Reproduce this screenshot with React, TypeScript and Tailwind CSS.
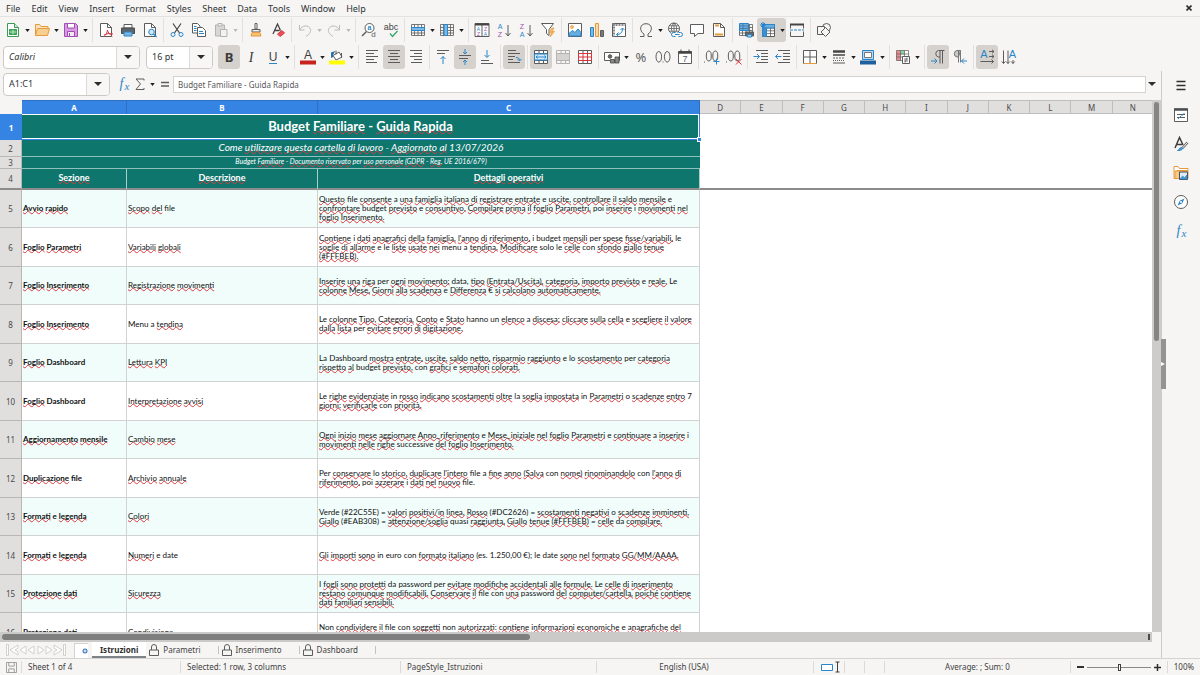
import React from 'react';

const G = '#5c5c5c';
const B = '#2a86c8';
const O = '#e69a3a';
const R = '#d8343c';
const P = '#a04fb0';

type Kids = { children?: React.ReactNode };

function Svg({ children }: Kids) {
  return (
    <svg viewBox="0 0 16 16" className="h-4 w-4 shrink-0" fill="none" stroke={G} strokeWidth="1" aria-hidden="true">
      {children}
    </svg>
  );
}

type GlyphProps = { x: number; y: number; s: number; c?: string; f?: string; w?: number; i?: boolean; t: string };
function Glyph({ x, y, s, c = G, f = 'Liberation Sans, sans-serif', w = 400, i = false, t }: GlyphProps) {
  return (
    <text x={x} y={y} fontSize={s} fill={c} stroke="none" fontFamily={f} fontWeight={w} fontStyle={i ? 'italic' : 'normal'} textAnchor="middle">
      {t}
    </text>
  );
}

const LinesIcon = ({ rows }: { rows: [number, number, number][] }) => (
  <Svg>
    {rows.map(([y, a, b]) => (
      <path key={y} d={`M${a} ${y}H${b}`} />
    ))}
  </Svg>
);

const GRID = 'M1.5 2.5h13v11h-13zM1.5 5.5h13M1.5 8.5h13M1.5 11h13M4.5 2.5v11M8 2.5v11M11.5 2.5v11';

const icons = {
  newSheet: (
    <Svg>
      <path d="M2.5 1.5h7l4 4v9h-11z" fill="#fff" stroke="#3a9b52" />
      <path d="M9.5 1.5v4h4" fill="#cfe9d4" stroke="#3a9b52" />
      <path d="M4.5 7.5h7v5h-7z" fill="#4caf65" stroke="#3a9b52" />
      <path d="M4.5 10h7M8 7.5v5" stroke="#d8f0dc" strokeWidth=".7" />
    </Svg>
  ),
  open: (
    <Svg>
      <path d="M1.5 13.5v-11h4l1.5 2h7v2" fill="#fbe3bd" stroke={O} />
      <path d="M1.5 13.5l2-7h12l-2 7z" fill="#f8cf91" stroke={O} />
    </Svg>
  ),
  save: (
    <Svg>
      <path d="M1.500 1.500h11l2 2v11h-13z" fill="#d69be2" stroke={P} />
      <path d="M4.500 1.500h7v4.500h-7z" fill="#fff" stroke={P} />
      <path d="M4.500 9.500h7v5h-7z" fill="#f4e6f7" stroke={P} />
      <path d="M6.500 11v3.500" stroke={P} />
    </Svg>
  ),
  pdf: (
    <Svg>
      <path d="M2.500 1.500h7l4 4v9h-11z" fill="#fff" />
      <path d="M9.500 1.500v4h4" />
      <path d="M6 14.500c2-1.500 3.500-4 3.300-6.500M6 13c3-1.500 6-2 9-1M9.300 8c.7 2.500 2.500 4.500 5 6.500" stroke={R} />
    </Svg>
  ),
  print: (
    <Svg>
      <path d="M4 2.500h8v3.500h-8z" fill="#fff" />
      <path d="M1.500 6h13v5.500h-13z" fill="#5d6468" stroke="#4a4f52" />
      <path d="M4 10h8v4h-8z" fill="#79b6e3" stroke={B} />
    </Svg>
  ),
  preview: (
    <Svg>
      <path d="M2.500 1.500h7l4 4v9h-11z" fill="#fff" />
      <path d="M9.500 1.500v4h4" />
      <circle cx="9.500" cy="10" r="2.800" fill="#cfe5f6" stroke={B} />
      <path d="M11.500 12l3 3" stroke={B} strokeWidth="1.400" />
    </Svg>
  ),
  cut: (
    <Svg>
      <path d="M4 1.500l6.500 9.500M12 1.500L5.500 11" stroke="#444" strokeWidth="1.200" />
      <circle cx="4" cy="12.500" r="2" stroke={B} />
      <circle cx="12" cy="12.500" r="2" stroke={B} />
    </Svg>
  ),
  copy: (
    <Svg>
      <path d="M1.500 1.500h5l2.500 2.500v7h-7.500z" fill="#fff" />
      <path d="M6.500 5.500h5l3 3v6h-8z" fill="#fff" />
      <path d="M3 4.500h2.500M3 6.500h2.500M3 8.500h2.500M8 9.500h4M8 11.500h5" stroke={B} />
    </Svg>
  ),
  paste: (
    <Svg>
      <path d="M2.500 3h9v11h-9z" fill="#d9d7d5" stroke="#b5b3b1" />
      <path d="M5 1.500h4v2.500h-4z" fill="#eee" stroke="#b5b3b1" />
      <path d="M7.500 7.500h6.500v7h-6.500z" fill="#f3f2f1" stroke="#b5b3b1" />
    </Svg>
  ),
  brush: (
    <Svg>
      <path d="M7 1.500h2v5.500h-2z" fill="#fff" />
      <path d="M4 7.500h8v2.500h-8z" fill="#eee" />
      <path d="M4 10.500h8l1 3.500h-10z" fill="#f6c27a" stroke={O} />
    </Svg>
  ),
  clear: (
    <Svg>
      <path d="M3 12L7.500 2l3 6.500M4.500 8.500h5" stroke="#444" strokeWidth="1.300" />
      <path d="M7.500 12l4.500-3.500 2.500 2.500-4.500 3.500z" fill="#e8505a" stroke={R} />
    </Svg>
  ),
  undo: (
    <Svg>
      <path d="M2.500 3v5h5M2.500 8c2-4.500 9.500-6 11-.5.500 3-1.500 5-4.500 7" stroke="#bcbab8" />
    </Svg>
  ),
  redo: (
    <Svg>
      <path d="M13.500 3v5h-5M13.500 8c-2-4.500-9.500-6-11-.5-.500 3 1.500 5 4.500 7" stroke="#bcbab8" />
    </Svg>
  ),
  find: (
    <Svg>
      <circle cx="8.500" cy="6" r="4.500" fill="#fff" />
      <path d="M5.500 9.500L1 14" strokeWidth="1.400" />
      <Glyph x={8.500} y={8} s={7} c={B} w={700} t="a" />
      <Glyph x={12.500} y={15} s={8} t="d" />
    </Svg>
  ),
  spell: (
    <Svg>
      <Glyph x={8} y={7.500} s={9} c="#444" t="abc" />
      <path d="M7 11.500l2.500 3 5-5.500" stroke="#35a869" strokeWidth="1.300" />
    </Svg>
  ),
  row: (
    <Svg>
      <path d={GRID} strokeWidth=".8" />
      <path d="M1.500 5.500h13v3h-13z" fill="#7db9e6" stroke={B} />
    </Svg>
  ),
  column: (
    <Svg>
      <path d={GRID} strokeWidth=".8" />
      <path d="M5 2.500h3.500v11H5z" fill="#7db9e6" stroke={B} />
    </Svg>
  ),
  sort: (
    <Svg>
      <path d="M1 1.500h14v13H1zM8 1.500v13" fill="#fff" />
      <path d="M1 2.500h14" stroke="#444" strokeWidth="2" />
      <Glyph x={4.500} y={8.500} s={5} c={B} t="A" />
      <Glyph x={4.500} y={14} s={5} c={P} t="Z" />
      <Glyph x={11.500} y={8.500} s={5} c={P} t="Z" />
      <Glyph x={11.500} y={14} s={5} c={B} t="A" />
    </Svg>
  ),
  sortAsc: (
    <Svg>
      <Glyph x={4} y={7} s={7} c={B} t="A" />
      <Glyph x={4} y={15} s={7} c={P} t="Z" />
      <path d="M12 3v11M9.500 11l2.500 3 2.500-3" />
    </Svg>
  ),
  sortDesc: (
    <Svg>
      <Glyph x={4} y={7} s={7} c={P} t="Z" />
      <Glyph x={4} y={15} s={7} c={B} t="A" />
      <path d="M12 3v11M9.500 11l2.500 3 2.500-3" />
    </Svg>
  ),
  filter: (
    <Svg>
      <path d="M1.500 1.500h12l-4.500 6v6l-2.500-2v-4z" fill="#fff" />
      <path d="M12 6l-3 4.500h2.500L10 15l4.500-5.500H12l2-3.500z" fill="#f6b65c" stroke={O} strokeWidth=".7" />
    </Svg>
  ),
  image: (
    <Svg>
      <path d="M1.500 1.500h13v13h-13z" fill="#fff" />
      <path d="M2 14v-2.500l3.500-3 2.500 2 3-3.500 3 3.500V14z" fill="#6aaee0" stroke={B} />
      <circle cx="5" cy="5" r="1.500" fill="#f6c27a" stroke={O} strokeWidth=".7" />
    </Svg>
  ),
  chart: (
    <Svg>
      <path d="M1.500 5.500h3v9h-3z" fill="#7db9e6" stroke={B} />
      <path d="M6.500 1.500h3v13h-3z" fill="#fbd9a4" stroke={O} />
      <path d="M11.500 8.500h3v6h-3z" fill="#7a7a7a" />
    </Svg>
  ),
  pivot: (
    <Svg>
      <path d="M1.500 1.500h13v13h-13z" fill="#fff" />
      <path d="M1.500 3h13M3 1.500v13" stroke="#8a8a8a" strokeWidth="2" strokeDasharray="2 1" />
      <path d="M5.500 12.500c4 0 6-2 6-6M9.500 8l2-2 2 2M7.500 10.500l-2 2 2 2" stroke={B} />
    </Svg>
  ),
  omega: (
    <Svg>
      <path d="M2 14.500h4v-2.500C1 9 1.500 1.700 8 1.700S15 9 10 12v2.500h4" />
    </Svg>
  ),
  link: (
    <Svg>
      <circle cx="7" cy="6.500" r="5.500" fill="#fff" />
      <path d="M1.500 6.500h11M7 1v11M2.500 3.800h9M2.500 9.200h9M7 1c-3.500 3-3.500 8 0 11M7 1c3.500 3 3.500 8 0 11" strokeWidth=".8" />
      <path d="M4.500 10.500h11v4h-11z" fill="#f6f5f4" stroke="none" />
      <path d="M8.500 10.500h-2a2 2 0 0 0 0 4h2M11.500 10.500h2a2 2 0 0 1 0 4h-2M8 12.500h4.500" stroke={B} />
    </Svg>
  ),
  comment: (
    <Svg>
      <path d="M1.500 2.500h13v9H9l-3.500 3v-3h-4z" fill="#fff" />
    </Svg>
  ),
  header: (
    <Svg>
      <path d="M2.500 1.500h7l4 4v9h-11z" fill="#fff" />
      <path d="M9.500 1.500v4h4" />
      <path d="M4 3.500h4M4 12.500h8" stroke={O} strokeWidth="2" />
    </Svg>
  ),
  printRange: (
    <Svg>
      <path d={GRID} strokeWidth=".8" />
      <path d="M1.500 1.500h9v7h-9z" fill="#6aaee0" stroke={B} />
      <path d="M1.500 4h9M1.500 6.500h9M5 1.500v7" stroke="#3b6f9a" strokeWidth=".7" />
      <path d="M7.500 10h8v4h-8z" fill="#5d6468" />
      <path d="M9.500 12.500h4v2.500h-4z" fill="#9fcdf0" stroke={B} />
    </Svg>
  ),
  freeze: (
    <Svg>
      <path d="M2.500 2.500h12v12h-12z" fill="#fff" />
      <path d="M2.500 6h12M2.500 8.800h12M2.500 11.600h12M6.500 2.500v12M10.500 2.500v12" strokeWidth=".8" />
      <path d="M2.500 2.500h12v3.500h-12z" fill="#6aaee0" stroke={B} />
      <path d="M2.500 6h4v8.500h-4z" fill="#3f8fd0" stroke={B} />
      <path d="M3 0v6M0 3h6M1 1l4 4M5 1L1 5" stroke="#1c7fd0" />
    </Svg>
  ),
  split: (
    <Svg>
      <path d="M1.500 2.500h13v4M1.500 6.500v-4M1.500 9.500v5h13v-5" />
      <path d="M1 2.500h14" strokeWidth="2" stroke="#444" />
      <path d="M1 8h14" stroke={B} strokeDasharray="3 1" />
    </Svg>
  ),
  shapes: (
    <Svg>
      <circle cx="10.500" cy="5.500" r="4" />
      <path d="M1.500 4.500h7v8h-7z" fill="#f6f5f4" />
      <path d="M9.500 5.500l4.500 4.500-4.500 4.500L5 10z" fill="#f6f5f4" />
    </Svg>
  ),
  bold: <Svg><Glyph x={8} y={12.500} s={13} c="#3a3a3a" f="Noto Sans, sans-serif" w={700} t="B" /></Svg>,
  italic: <Svg><Glyph x={8} y={12.500} s={14} f="Liberation Serif, serif" i c="#3a3a3a" t="I" /></Svg>,
  underline: (
    <Svg>
      <Glyph x={8} y={11.500} s={12} c="#444" t="U" />
      <path d="M4 14.500h8" stroke={B} />
    </Svg>
  ),
  fontColor: (
    <Svg>
      <Glyph x={8} y={10} s={12} c="#3a3a3a" t="A" />
      <path d="M0 13.500h16" stroke="#c9211e" strokeWidth="4" />
    </Svg>
  ),
  highlight: (
    <Svg>
      <path d="M4 6.500L10 3l3 5-6 3z" fill="#fff" />
      <path d="M7 1.500v4M12.500 4v5" />
      <path d="M2 9V3.500l4-1.500-1 2.500-1 1V8z" fill="#2a6fa8" stroke="none" />
      <path d="M0 13.500h16" stroke="#ffff00" strokeWidth="4" />
    </Svg>
  ),
  left: <LinesIcon rows={[[1.500, 2, 14], [4.500, 2, 10], [7.500, 2, 14], [10.500, 2, 10], [13.500, 2, 13]]} />,
  center: <LinesIcon rows={[[1.500, 2, 14], [4.500, 4, 12], [7.500, 2, 14], [10.500, 4, 12], [13.500, 2, 14]]} />,
  right: <LinesIcon rows={[[1.500, 2, 14], [4.500, 6, 14], [7.500, 2, 14], [10.500, 6, 14], [13.500, 3, 14]]} />,
  top: (
    <Svg>
      <path d="M2 1.500h12M2 4.500h8" />
      <path d="M8 15V7.500M5.500 10L8 7.500l2.500 2.500" stroke={B} />
    </Svg>
  ),
  middle: (
    <Svg>
      <path d="M2 6.500h12M2 9.500h9" />
      <path d="M8 0v5M6 3l2 2 2-2M8 16v-5M6 13l2-2 2 2" stroke={B} />
    </Svg>
  ),
  bottom: (
    <Svg>
      <path d="M2 11.500h8M2 14.500h12" />
      <path d="M8 1v7M5.500 6L8 8.500 10.500 6" stroke={B} />
    </Svg>
  ),
  wrap: (
    <Svg>
      <path d="M2 1.500h8M2 4.500h12M2 7.500h7M2 10.500h5M2 13.500h12" />
      <path d="M10 8.500c2.500 0 3.500 1 3.500 3M11.500 10l2 2 2-2" stroke={B} />
    </Svg>
  ),
  merge: (
    <Svg>
      <path d="M1.500 1.500h13v13h-13zM1.500 4.500h13M1.500 11.500h13M6 1.500v3M10.500 1.500v3M6 11.500v3M10.500 11.500v3" fill="#fff" />
      <path d="M1.500 5h13v6h-13z" fill="#d6eafa" stroke={B} />
      <path d="M3 8h10M4.500 6.500L3 8l1.500 1.500M11.500 6.500L13 8l-1.500 1.500" stroke={B} />
    </Svg>
  ),
  mergeCells: (
    <Svg>
      <path d="M1.500 1.500h13v13h-13zM1.500 4.500h13M1.500 11.500h13M6 1.500v3M10.500 1.500v3M6 11.500v3M10.500 11.500v3" stroke="#b5b3b1" />
      <path d="M2 5h12v6H2z" fill="#d5d3d1" stroke="none" />
    </Svg>
  ),
  unmerge: (
    <Svg>
      <path d="M1.500 1.500h13v13h-13zM6 1.500v3M10.500 1.500v3M6 11.500v3M10.500 11.500v3" fill="#fff" />
      <path d="M1.500 4.500h13v7h-13zM6 4.500v7M10.500 4.500v7M1.500 8h13" fill="#fff" stroke={R} />
    </Svg>
  ),
  currency: (
    <Svg>
      <path d="M.500 3.500h15v8H.500z" fill="#fff" />
      <circle cx="6" cy="7.500" r="1.800" fill="#666" />
      <path d="M6.500 10.500h4v3.500h-4zM11 8h4v6h-4z" fill="#8a8a8a" stroke="#444" strokeWidth=".8" />
    </Svg>
  ),
  percent: <Svg><Glyph x={8} y={12.500} s={13} t="%" f="Noto Sans, sans-serif" /></Svg>,
  number: (
    <Svg>
      <ellipse cx="3.800" cy="7.800" rx="2.800" ry="5.300" />
      <ellipse cx="12.200" cy="7.800" rx="2.800" ry="5.300" />
      <path d="M7.500 13h1" />
    </Svg>
  ),
  date: (
    <Svg>
      <path d="M1.500 2.500h13v12h-13z" fill="#fff" />
      <path d="M1.500 3.500h13" stroke="#444" strokeWidth="2.500" />
      <path d="M4 .500v3M12 .500v3" stroke="#444" />
      <Glyph x={8} y={13} s={9} t="7" />
    </Svg>
  ),
  addDecimal: (
    <Svg>
      <path d="M0 13h1" />
      <ellipse cx="4.800" cy="7" rx="2.500" ry="5" />
      <ellipse cx="11.300" cy="7" rx="2.500" ry="5" />
      <path d="M12.500 9.500v6M9.500 12.500h6" stroke={B} />
    </Svg>
  ),
  delDecimal: (
    <Svg>
      <path d="M0 13h1" />
      <ellipse cx="4.800" cy="7" rx="2.500" ry="5" />
      <ellipse cx="11.300" cy="7" rx="2.500" ry="5" />
      <path d="M10 10l5.500 5.500M15.500 10L10 15.500" stroke={R} />
    </Svg>
  ),
  indent: (
    <Svg>
      <path d="M3 1.500h12M8 4.500h7M8 7.500h7M8 10.500h7M3 13.500h12" />
      <path d="M.500 7.500h6M4 5l2.500 2.500L4 10" stroke={B} />
    </Svg>
  ),
  outdent: (
    <Svg>
      <path d="M3 1.500h12M8 4.500h7M8 7.500h7M8 10.500h7M3 13.500h12" />
      <path d="M.500 7.500h6M3 5L.500 7.500 3 10" stroke={B} />
    </Svg>
  ),
  borders: (
    <Svg>
      <path d="M1.500 1.500h13v13h-13z" fill="#fff" />
      <path d="M8 1.500v13M1.500 8h13" />
      <path d="M1.500 14.500h13" stroke={O} />
    </Svg>
  ),
  lineStyle: (
    <Svg>
      <path d="M2 2.500h12" stroke="#444" strokeWidth="2.500" />
      <path d="M2 6h12" stroke="#444" strokeWidth="1.500" />
      <path d="M2 9h12" strokeDasharray="2 1" />
      <path d="M2 11.500h12" strokeDasharray="1 1" />
      <path d="M2 14h12" />
    </Svg>
  ),
  borderColor: (
    <Svg>
      <path d="M2.500 1.500h11v9h-11z" fill="#bcd8ee" stroke={B} />
      <path d="M4.500 3.500h7v5h-7z" fill="#fff" stroke="#777" />
      <path d="M0 13.500h16" stroke="#1f5f9e" strokeWidth="4" />
    </Svg>
  ),
  conditional: (
    <Svg>
      <path d="M1.500 1.500h12v10h-12z" fill="#fff" stroke="none" />
      <path d="M1.500 1.500h4v10h-4z" fill="#ee8a8f" stroke="none" />
      <path d="M5.500 1.500h4v4h-4z" fill="#8fd49b" stroke="none" />
      <path d="M1.500 1.500h12v10h-12zM1.500 5h12M1.500 8h12M5.500 1.500v10M9.500 1.500v10" strokeWidth=".7" />
      <path d="M7.500 7.500h7v7h-7z" fill="#fff" />
      <path d="M9 10h4M9 12h4M12 8.500l-2 5" strokeWidth=".8" />
    </Svg>
  ),
  ltr: (
    <Svg>
      <path d="M14.500 1.500h-6a3.300 3.300 0 0 0 0 6.500H10M10 1.500v13M12.500 1.500v13" />
      <path d="M1 12h6M4.500 9.500L7 12l-2.500 2.500" stroke={B} />
    </Svg>
  ),
  rtl: (
    <Svg>
      <path d="M8.500 1.500H5a3.300 3.300 0 0 0 0 6.500h1.500zM6.500 1.500v12M8.500 1.500v12" fill="#c9c7c5" stroke="#777" />
      <path d="M15 12H9.500M12 9.500L9.500 12l2.500 2.500" stroke={B} />
    </Svg>
  ),
  textRight: (
    <Svg>
      <Glyph x={5} y={9} s={11} c={B} t="A" />
      <path d="M10 2.500h5M10 7.500h5M1.500 12.500h13M13 .700l2 1.800-2 1.800M13 5.700l2 1.800-2 1.800M12.500 10.500l2 2-2 2" />
    </Svg>
  ),
  textDown: (
    <Svg>
      <Glyph x={11.500} y={9} s={11} c={B} t="A" />
      <path d="M2.500 1.500v13M7 1.500v13M12 11v3.500M.700 12.500l1.800 2 1.800-2M5.200 12.500l1.800 2 1.800-2M10.200 12.500l1.800 2 1.800-2" />
    </Svg>
  ),
  fx: (
    <Svg>
      <Glyph x={5.500} y={11.500} s={14} f="Liberation Serif, serif" i c={B} t="f" />
      <Glyph x={11} y={13.500} s={11} f="Liberation Serif, serif" i c={B} t="x" />
    </Svg>
  ),
  sum: (
    <Svg>
      <path d="M12 4.500V3h-8l4.500 5L4 13.500h8V12" />
    </Svg>
  ),
  equals: (
    <Svg>
      <path d="M4 6.500h8M4 10h8" strokeWidth="1.500" />
    </Svg>
  ),
  menu: (
    <Svg>
      <path d="M3.500 4.500h9M3.500 8.500h9M3.500 12.500h9" stroke="#2e2e2e" strokeWidth="1.500" />
    </Svg>
  ),
  properties: (
    <Svg>
      <path d="M1.500 2h13v12.500h-13z" fill="#fff" />
      <path d="M1 2.500h14" stroke="#4a4f55" strokeWidth="2.500" />
      <path d="M4 7.500h8M4 10.500h8" />
      <path d="M8.500 9l3-3M5 12l3-3" stroke={B} />
    </Svg>
  ),
  styles: (
    <Svg>
      <path d="M2 12L6.500 1.500 10 9M3.500 8.500h5.500" stroke="#3d3d3d" strokeWidth="1.500" />
      <path d="M14.500 6.500L9.500 12" strokeWidth="2.500" />
      <path d="M14.500 6.500L9.500 12" stroke="#fff" />
      <path d="M4.500 14.500c2 0 1.500-3 4-3 2 0 2 3-4 3z" fill="#4f9bd8" stroke={B} />
    </Svg>
  ),
  gallery: (
    <Svg>
      <path d="M1 13.500v-12h4l1.500 2h8.500v2H4l-1.500 8z" fill="#fff" stroke={O} />
      <path d="M2 13.500V6h13v7.500z" fill="#f8c98a" stroke={O} />
      <path d="M6.500 7h8v7.500h-8z" fill="#dcecf8" stroke="#4a4f55" />
      <path d="M7 14l2.500-3 2 1.500L14 10v4z" fill="#4f9bd8" stroke={B} strokeWidth=".6" />
    </Svg>
  ),
  navigator: (
    <Svg>
      <circle cx="8" cy="8" r="6.500" fill="#fff" />
      <path d="M11.500 4.500L9.300 9.300 4.500 11.500l2.200-4.800z" fill="#2a86c8" stroke="none" />
      <circle cx="8" cy="8" r="1" fill="#fff" stroke="none" />
    </Svg>
  ),
  lock: (
    <Svg>
      <path d="M3.500 8h9v5.500h-9zM5.500 8V5a2.500 2.500 0 0 1 5 0v3" />
    </Svg>
  ),
};

type IconName = keyof typeof icons;
type Tool = { id: IconName; label: string; menu?: boolean; on?: boolean; off?: boolean };

const Caret = ({ faint = false }: { faint?: boolean }) => (
  <svg viewBox="0 0 6 4" className="h-[3px] w-[5px] shrink-0" aria-hidden="true">
    <path d="M0 0h6L3 4z" fill={faint ? '#bcbab8' : '#1e1e1e'} />
  </svg>
);

const BigCaret = () => (
  <svg viewBox="0 0 8 4" className="h-1 w-2 shrink-0" aria-hidden="true">
    <path d="M0 0h8L4 4z" fill="#2e2e2e" />
  </svg>
);

function ToolGroups({ groups }: { groups: Tool[][] }) {
  return (
    <>
      {groups.map((group, gi) => {
        const prev = gi > 0 ? groups[gi - 1] : null;
        const wide = prev !== null && prev[prev.length - 1].menu;
        return (
          <React.Fragment key={gi}>
            {prev && (
              <div className={wide ? 'flex w-[6px] shrink-0 justify-center' : 'flex w-[5px] shrink-0 justify-center'}>
                <div className="h-6 w-px bg-[#e2e0de]" />
              </div>
            )}
            {group.map((tool) => (
              <div key={tool.id} className={tool.on ? 'flex h-6 shrink-0 items-center rounded-[3px] bg-[#d5d1cd]' : 'flex h-6 shrink-0 items-center'}>
                <button type="button" aria-label={tool.label} aria-pressed={tool.on} disabled={tool.off} className="flex h-6 w-[22px] items-center justify-center">
                  {icons[tool.id]}
                </button>
                {tool.menu && (
                  <button type="button" aria-label={`${tool.label} options`} disabled={tool.off} className="flex h-6 w-[7px] items-center justify-center">
                    <Caret faint={tool.off} />
                  </button>
                )}
              </div>
            ))}
          </React.Fragment>
        );
      })}
    </>
  );
}

const standardTools: Tool[][] = [
  [
    { id: 'newSheet', label: 'New', menu: true },
    { id: 'open', label: 'Open', menu: true },
    { id: 'save', label: 'Save', menu: true },
  ],
  [
    { id: 'pdf', label: 'Export as PDF' },
    { id: 'print', label: 'Print' },
    { id: 'preview', label: 'Print preview' },
  ],
  [
    { id: 'cut', label: 'Cut' },
    { id: 'copy', label: 'Copy' },
    { id: 'paste', label: 'Paste', menu: true, off: true },
  ],
  [
    { id: 'brush', label: 'Clone formatting' },
    { id: 'clear', label: 'Clear formatting' },
  ],
  [
    { id: 'undo', label: 'Undo', menu: true, off: true },
    { id: 'redo', label: 'Redo', menu: true, off: true },
  ],
  [
    { id: 'find', label: 'Find and replace' },
    { id: 'spell', label: 'Spelling' },
  ],
  [
    { id: 'row', label: 'Row', menu: true },
    { id: 'column', label: 'Column', menu: true },
  ],
  [
    { id: 'sort', label: 'Sort' },
    { id: 'sortAsc', label: 'Sort ascending' },
    { id: 'sortDesc', label: 'Sort descending' },
    { id: 'filter', label: 'AutoFilter' },
  ],
  [
    { id: 'image', label: 'Insert image' },
    { id: 'chart', label: 'Insert chart' },
    { id: 'pivot', label: 'Insert pivot table' },
  ],
  [
    { id: 'omega', label: 'Special character', menu: true },
    { id: 'link', label: 'Insert hyperlink' },
    { id: 'comment', label: 'Insert comment' },
    { id: 'header', label: 'Headers and footers' },
  ],
  [
    { id: 'printRange', label: 'Define print area' },
    { id: 'freeze', label: 'Freeze rows and columns', menu: true, on: true },
    { id: 'split', label: 'Split window' },
  ],
  [{ id: 'shapes', label: 'Show draw functions' }],
];

const formatTools: Tool[][] = [
  [
    { id: 'bold', label: 'Bold', on: true },
    { id: 'italic', label: 'Italic' },
    { id: 'underline', label: 'Underline', menu: true },
  ],
  [
    { id: 'fontColor', label: 'Font color', menu: true },
    { id: 'highlight', label: 'Background color', menu: true },
  ],
  [
    { id: 'left', label: 'Align left' },
    { id: 'center', label: 'Center horizontally', on: true },
    { id: 'right', label: 'Align right' },
  ],
  [
    { id: 'top', label: 'Align top' },
    { id: 'middle', label: 'Center vertically', on: true },
    { id: 'bottom', label: 'Align bottom' },
  ],
  [{ id: 'wrap', label: 'Wrap text', on: true }],
  [
    { id: 'merge', label: 'Merge and center', on: true },
    { id: 'mergeCells', label: 'Merge cells', off: true },
    { id: 'unmerge', label: 'Unmerge cells' },
  ],
  [
    { id: 'currency', label: 'Format as currency', menu: true },
    { id: 'percent', label: 'Format as percent' },
    { id: 'number', label: 'Format as number' },
    { id: 'date', label: 'Format as date' },
  ],
  [
    { id: 'addDecimal', label: 'Add decimal place' },
    { id: 'delDecimal', label: 'Delete decimal place' },
  ],
  [
    { id: 'indent', label: 'Increase indent' },
    { id: 'outdent', label: 'Decrease indent' },
  ],
  [
    { id: 'borders', label: 'Borders', menu: true },
    { id: 'lineStyle', label: 'Border style', menu: true },
    { id: 'borderColor', label: 'Border color', menu: true },
  ],
  [{ id: 'conditional', label: 'Conditional formatting', menu: true }],
  [
    { id: 'ltr', label: 'Left-to-right', on: true },
    { id: 'rtl', label: 'Right-to-left' },
  ],
  [
    { id: 'textRight', label: 'Text direction from left to right', on: true },
    { id: 'textDown', label: 'Text direction from top to bottom' },
  ],
];

function Combo({ label, value, width, italic = false }: { label: string; value: string; width: string; italic?: boolean }) {
  return (
    <div className={`flex h-[23px] shrink-0 overflow-hidden rounded-[4px] border border-[#cdc9c5] bg-white ${width}`}>
      <input
        aria-label={label}
        defaultValue={value}
        className={`w-0 flex-1 bg-transparent pl-[5px] text-[9px] text-[#2e3436] outline-none ${italic ? 'italic' : ''}`}
      />
      <button type="button" aria-label={`${label} list`} className="flex w-[23px] items-center justify-center border-l border-[#dcd9d6] bg-[#f8f7f6]">
        <BigCaret />
      </button>
    </div>
  );
}

/* Words the spelling checker accepts; every other word gets a wavy line. */
const accepted = new Set(
  'budget come per ue file a e i o in la le lo poi con menu solo dashboard data date un hanno non euro es da quasi verde password successive'.split(' '),
);

function Spelled({ text }: { text: string }) {
  return (
    <>
      {text.split(' ').map((word, i) => {
        const core = word.toLowerCase().replace(/[.,:;()#€=-]/g, '');
        const ok = core === '' || /\d/.test(core) || accepted.has(core);
        return (
          <React.Fragment key={i}>
            {i > 0 && ' '}
            {ok ? word : <span className="underline decoration-[#dc3a40] decoration-wavy decoration-[1px] underline-offset-[-1px] [text-decoration-skip-ink:none]">{word}</span>}
          </React.Fragment>
        );
      })}
    </>
  );
}

const rows: { section: string; topic: string; details: string[] }[] = [
  {
    section: 'Avvio rapido',
    topic: 'Scopo del file',
    details: [
      'Questo file consente a una famiglia italiana di registrare entrate e uscite, controllare il saldo mensile e',
      'confrontare budget previsto e consuntivo. Compilare prima il foglio Parametri, poi inserire i movimenti nel',
      'foglio Inserimento.',
    ],
  },
  {
    section: 'Foglio Parametri',
    topic: 'Variabili globali',
    details: [
      "Contiene i dati anagrafici della famiglia, l'anno di riferimento, i budget mensili per spese fisse/variabili, le",
      'soglie di allarme e le liste usate nei menu a tendina. Modificare solo le celle con sfondo giallo tenue',
      '(#FFFBEB).',
    ],
  },
  {
    section: 'Foglio Inserimento',
    topic: 'Registrazione movimenti',
    details: [
      'Inserire una riga per ogni movimento: data, tipo (Entrata/Uscita), categoria, importo previsto e reale. Le',
      'colonne Mese, Giorni alla scadenza e Differenza € si calcolano automaticamente.',
    ],
  },
  {
    section: 'Foglio Inserimento',
    topic: 'Menu a tendina',
    details: [
      'Le colonne Tipo, Categoria, Conto e Stato hanno un elenco a discesa: cliccare sulla cella e scegliere il valore',
      'dalla lista per evitare errori di digitazione.',
    ],
  },
  {
    section: 'Foglio Dashboard',
    topic: 'Lettura KPI',
    details: [
      'La Dashboard mostra entrate, uscite, saldo netto, risparmio raggiunto e lo scostamento per categoria',
      'rispetto al budget previsto, con grafici e semafori colorati.',
    ],
  },
  {
    section: 'Foglio Dashboard',
    topic: 'Interpretazione avvisi',
    details: [
      'Le righe evidenziate in rosso indicano scostamenti oltre la soglia impostata in Parametri o scadenze entro 7',
      'giorni: verificarle con priorità.',
    ],
  },
  {
    section: 'Aggiornamento mensile',
    topic: 'Cambio mese',
    details: [
      'Ogni inizio mese aggiornare Anno_riferimento e Mese_iniziale nel foglio Parametri e continuare a inserire i',
      'movimenti nelle righe successive del foglio Inserimento.',
    ],
  },
  {
    section: 'Duplicazione file',
    topic: 'Archivio annuale',
    details: [
      "Per conservare lo storico, duplicare l'intero file a fine anno (Salva con nome) rinominandolo con l'anno di",
      'riferimento, poi azzerare i dati nel nuovo file.',
    ],
  },
  {
    section: 'Formati e legenda',
    topic: 'Colori',
    details: [
      'Verde (#22C55E) = valori positivi/in linea, Rosso (#DC2626) = scostamenti negativi o scadenze imminenti,',
      'Giallo (#EAB308) = attenzione/soglia quasi raggiunta, Giallo tenue (#FFFBEB) = celle da compilare.',
    ],
  },
  {
    section: 'Formati e legenda',
    topic: 'Numeri e date',
    details: ['Gli importi sono in euro con formato italiano (es. 1.250,00 €); le date sono nel formato GG/MM/AAAA.'],
  },
  {
    section: 'Protezione dati',
    topic: 'Sicurezza',
    details: [
      'I fogli sono protetti da password per evitare modifiche accidentali alle formule. Le celle di inserimento',
      'restano comunque modificabili. Conservare il file con una password del computer/cartella, poiché contiene',
      'dati familiari sensibili.',
    ],
  },
  {
    section: 'Protezione dati',
    topic: 'Condivisione',
    details: ['Non condividere il file con soggetti non autorizzati: contiene informazioni economiche e anagrafiche del', '\u00a0'],
  },
];

const restColumns = ['D', 'E', 'F', 'G', 'H', 'I', 'J', 'K', 'L', 'M', 'N'];

const rowHead = 'border-b border-r border-[#b9b7b5] bg-[#e0dfde] text-center text-[8px] font-normal text-[#4a4a4a]';

function Sheet() {
  return (
    <table className="w-[calc(100%+2px)] table-fixed border-separate border-spacing-0 leading-[9px]">
      <colgroup>
        <col className="w-[22px]" />
        <col className="w-[105px]" />
        <col className="w-[191px]" />
        <col className="w-[382px]" />
        {restColumns.map((c) => (
          <col key={c} />
        ))}
      </colgroup>
      <thead>
        <tr className="h-[14px] text-[8px]">
          <td className="bg-[#f6f5f4]" />
          {['A', 'B', 'C'].map((c) => (
            <th key={c} scope="col" className="border-r border-t border-[#2d70c2] bg-[#3584e4] p-0 font-bold text-white">
              {c}
            </th>
          ))}
          {restColumns.map((c) => (
            <th key={c} scope="col" className="border-b border-r border-t border-[#c0bebc] bg-[#e0dfde] p-0 font-normal text-[#4a4a4a]">
              {c}
            </th>
          ))}
        </tr>
      </thead>
      <tbody className="font-['Lato',sans-serif]">
        <tr className="h-[26px]">
          <th scope="row" className="bg-[#3584e4] p-0 text-center font-['Noto_Sans',sans-serif] text-[8px] font-bold text-white">1</th>
          <td colSpan={3} className="relative border-b border-r border-[#3584e4] bg-[#0f766e] p-0 pb-[2px] text-center text-[13px] font-bold leading-[16px] text-white shadow-[inset_-1px_-1px_0_#fff,inset_0_1px_0_#fff]">
            <Spelled text="Budget Familiare - Guida Rapida" />
            <span className="absolute -bottom-[3px] -right-[3px] z-10 h-[5px] w-[5px] border border-white bg-[#3584e4]" />
          </td>
          <td colSpan={11} />
        </tr>
        <tr className="h-[17px]">
          <th scope="row" className={`p-0 font-['Noto_Sans',sans-serif] ${rowHead}`}>2</th>
          <td colSpan={3} className="border-b border-[#8fc0bb] bg-[#0f766e] p-0 pb-[2px] text-center text-[10px] italic text-white">
            <Spelled text="Come utilizzare questa cartella di lavoro - Aggiornato al 13/07/2026" />
          </td>
          <td colSpan={11} />
        </tr>
        <tr className="h-[12px]">
          <th scope="row" className={`p-0 font-['Noto_Sans',sans-serif] ${rowHead}`}>3</th>
          <td colSpan={3} className="border-b border-[#8fc0bb] bg-[#0f766e] p-0 pb-[2px] text-center text-[7px] italic text-white">
            <Spelled text="Budget Familiare - Documento riservato per uso personale (GDPR - Reg. UE 2016/679)" />
          </td>
          <td colSpan={11} />
        </tr>
        <tr className="h-[21px]">
          <th scope="row" className="border-b-2 border-r border-b-[#8c8c8c] border-r-[#b9b7b5] bg-[#e0dfde] p-0 text-center font-['Noto_Sans',sans-serif] text-[8px] font-normal text-[#4a4a4a]">4</th>
          {['Sezione', 'Descrizione', 'Dettagli operativi'].map((t) => (
            <td key={t} className="border-b-2 border-r border-b-[#8c8c8c] border-r-[#a9cfcb] bg-[#0f766e] p-0 pb-[2px] text-center text-[9px] font-bold text-white">
              <Spelled text={t} />
            </td>
          ))}
          <td colSpan={11} className="border-b-2 border-[#8c8c8c]" />
        </tr>
        {rows.map((r, i) => {
          const cell = `border-b border-r border-[#d0d3d2] p-0 pl-px text-[8px] text-[#111] whitespace-nowrap ${i % 2 === 0 ? 'bg-[#f0fdfa]' : 'bg-white'}`;
          return (
            <tr key={i} className={i % 2 === 0 ? 'h-[38px]' : 'h-[39px]'}>
              <th scope="row" className={`p-0 font-['Noto_Sans',sans-serif] ${rowHead}`}>{i + 5}</th>
              <td className={`${cell} font-bold`}>
                <Spelled text={r.section} />
              </td>
              <td className={cell}>
                <Spelled text={r.topic} />
              </td>
              <td className={cell}>
                {r.details.map((line) => (
                  <div key={line}>
                    <Spelled text={line} />
                  </div>
                ))}
              </td>
              <td colSpan={11} />
            </tr>
          );
        })}
      </tbody>
    </table>
  );
}

const menus = ['File', 'Edit', 'View', 'Insert', 'Format', 'Styles', 'Sheet', 'Data', 'Tools', 'Window', 'Help'];
const sideTabs: { id: IconName; label: string }[] = [
  { id: 'properties', label: 'Properties' },
  { id: 'styles', label: 'Styles' },
  { id: 'gallery', label: 'Gallery' },
  { id: 'navigator', label: 'Navigator' },
  { id: 'fx', label: 'Functions' },
];

function SheetTabs() {
  return (
    <nav className="flex h-4 shrink-0 items-center text-[8px] text-[#3f3f3f]">
      <svg viewBox="0 0 60 12" className="ml-[6px] h-3 w-[60px]" fill="#fff" stroke="#d2d0ce" aria-hidden="true">
        <path d="M.500.500h2v11h-2zM12 1L4 6l8 5V8l-3-2 3-2zM20 2l-6 4 6 4zM28 2l-6 4 6 4zM32 2l6 4-6 4zM40 2l6 4-6 4zM48 1l8 5-8 5V8l3-2-3-2zM57.500.500h2v11h-2z" />
      </svg>
      <button type="button" aria-label="Add sheet" className="ml-2 flex h-[15px] w-[14px] items-center justify-end border-l border-t border-[#d5d3d1] bg-white">
        <svg viewBox="0 0 6 6" className="h-[6px] w-[6px]" aria-hidden="true">
          <circle cx="3" cy="3" r="2.500" fill="#3a78c4" />
          <path d="M3 1.500v3M1.500 3h3" stroke="#fff" />
        </svg>
      </button>
      <button type="button" aria-current="page" className="ml-1 flex h-4 items-center border-b-2 border-[#7d8488] bg-white px-2 pt-[2px] font-bold text-[#2e2e2e]">
        Istruzioni
      </button>
      {['Parametri', 'Inserimento', 'Dashboard'].map((name) => (
        <button key={name} type="button" className="flex h-4 items-center gap-px">
          {icons.lock}
          {name}
          <span className="ml-4 h-2 w-px bg-[#c4c2c0]" />
        </button>
      ))}
    </nav>
  );
}

function StatusBar() {
  const cell = 'flex h-3 items-center overflow-hidden whitespace-nowrap border-r border-[#dcdad8] px-[6px]';
  return (
    <footer className="grid h-[17px] shrink-0 grid-cols-[22px_159fr_220fr_196fr_217fr_31px_20px_20px_186fr_97px_32px] items-center border-t border-[#d5d3d1] text-[8px] text-[#3f3f3f]">
      <div className={cell}>
        <svg viewBox="0 0 12 12" className="h-[11px] w-[11px] shrink-0" fill="none" stroke="#9a9896" aria-hidden="true">
          <path d="M.500.500h11v11H.500zM3 .500v4h6v-4M3 11.500v-4h6v4" />
        </svg>
      </div>
      <div className={cell}>Sheet 1 of 4</div>
      <div className={cell}>Selected: 1 row, 3 columns</div>
      <div className={cell}>PageStyle_Istruzioni</div>
      <div className={`${cell} justify-center pr-12`}>English (USA)</div>
      <div className={cell}>
        <svg viewBox="0 0 20 12" className="h-3 w-5 shrink-0" fill="none" aria-hidden="true">
          <path d="M1.500 3.500h11v6h-11z" fill="#fff" stroke={B} />
          <path d="M17.500 1v10M15.500 1h4M15.500 11h4" stroke="#3f3f3f" />
        </svg>
      </div>
      <div className={cell} />
      <div className={cell} />
      <div className={`${cell} justify-center`}>Average: ; Sum: 0</div>
      <div className={`${cell} justify-between`}>
        <button type="button" aria-label="Zoom out" className="h-[2px] w-[7px] bg-[#2e2e2e]" />
        <input
          type="range"
          aria-label="Zoom"
          defaultValue={50}
          className="h-2 w-16 appearance-none bg-[linear-gradient(#8a8886,#8a8886)] bg-[length:100%_1px] bg-center bg-no-repeat [&::-webkit-slider-thumb]:h-[7px] [&::-webkit-slider-thumb]:w-[3px] [&::-webkit-slider-thumb]:appearance-none [&::-webkit-slider-thumb]:border [&::-webkit-slider-thumb]:border-[#3f3f3f] [&::-webkit-slider-thumb]:bg-white"
        />
        <button type="button" aria-label="Zoom in">
          <svg viewBox="0 0 7 7" className="h-[7px] w-[7px]" stroke="#2e2e2e" strokeWidth="1.500" aria-hidden="true">
            <path d="M3.500 0v7M0 3.500h7" />
          </svg>
        </button>
      </div>
      <div className="whitespace-nowrap text-center">100%</div>
    </footer>
  );
}

export default function App() {
  return (
    <div className="flex h-screen flex-col overflow-hidden bg-[#f6f5f4] font-['Noto_Sans',sans-serif] text-[#2e3436]">
      <header className="shrink-0">
        <div className="flex h-[17px] items-center border-b border-[#e4e2e0] pl-[6px] pr-2">
          <nav className="flex flex-1 gap-[11px] pt-px text-[9px] leading-[15px]">
            {menus.map((m) => (
              <button key={m} type="button">
                {m}
              </button>
            ))}
          </nav>
          <button type="button" aria-label="Close document">
            <svg viewBox="0 0 6 6" className="h-[6px] w-[6px]" stroke="#2e2e2e" strokeWidth="1.600" aria-hidden="true">
              <path d="M.500.500l5 5M5.500.500l-5 5" />
            </svg>
          </button>
        </div>
        <div role="toolbar" aria-label="Standard" className="flex h-[26px] items-center pl-[2px]">
          <ToolGroups groups={standardTools} />
        </div>
        <div role="toolbar" aria-label="Formatting" className="flex h-[28px] items-center pl-[3px]">
          <Combo label="Font name" value="Calibri" width="w-[137px] mr-[6px]" italic />
          <Combo label="Font size" value="16 pt" width="w-[67px] mr-[5px]" />
          <ToolGroups groups={formatTools} />
        </div>
      </header>

      <div className="flex min-h-0 flex-1">
        <main className="flex min-w-0 flex-1 flex-col">
          <div className="flex h-[29px] shrink-0 items-center pb-[3px] pl-[3px]">
            <Combo label="Name box" value="A1:C1" width="w-[107px] mr-[6px]" />
            <button type="button" aria-label="Function wizard">{icons.fx}</button>
            <button type="button" aria-label="Select function">{icons.sum}</button>
            <button type="button" aria-label="Function list" className="flex w-2 justify-center">
              <Caret />
            </button>
            <button type="button" aria-label="Formula" className="ml-px">{icons.equals}</button>
            <input
              aria-label="Input line"
              defaultValue="Budget Familiare - Guida Rapida"
              className="h-[17px] min-w-0 flex-1 border border-[#d5d3d1] bg-white pl-1 text-[8px] text-[#5a5a5a] outline-none"
            />
            <button type="button" aria-label="Expand formula bar" className="flex w-[15px] justify-center pr-[3px]">
              <BigCaret />
            </button>
          </div>
          <div className="flex min-h-0 flex-1">
            <div className="min-w-0 flex-1 overflow-hidden bg-white">
              <Sheet />
            </div>
            <div className="w-[9px] shrink-0 bg-[#cdcccb] px-[2px] pt-[2px]">
              <div className="h-[45%] w-[5px] rounded-full bg-[#858585]" />
            </div>
          </div>
          <div className="flex shrink-0">
            <div className="flex h-[10px] flex-1 items-center justify-between bg-[#cbcac9] px-[2px]">
              <div className="h-[6px] w-[46%] rounded-full bg-[#7e7e7e]" />
              <div className="h-[6px] w-[2px] bg-[#4a4a4a]" />
            </div>
            <div className="w-[9px]" />
          </div>
          <SheetTabs />
        </main>
        <aside className="relative flex w-[39px] shrink-0 flex-col items-center border-l border-[#cdcac7] pt-[6px]">
          <button type="button" aria-label="Sidebar settings">{icons.menu}</button>
          <div className="mt-[14px] flex flex-col gap-[13px]">
            {sideTabs.map((t) => (
              <button key={t.id} type="button" aria-label={t.label}>
                {icons[t.id]}
              </button>
            ))}
          </div>
          <button type="button" aria-label="Collapse sidebar" className="absolute -left-px top-[268px] flex h-[50px] w-[5px] items-center bg-[#939393]">
            <svg viewBox="0 0 4 4" className="h-1 w-1" aria-hidden="true">
              <path d="M0 0l4 2-4 2z" fill="#fff" />
            </svg>
          </button>
        </aside>
      </div>
      <StatusBar />
    </div>
  );
}
